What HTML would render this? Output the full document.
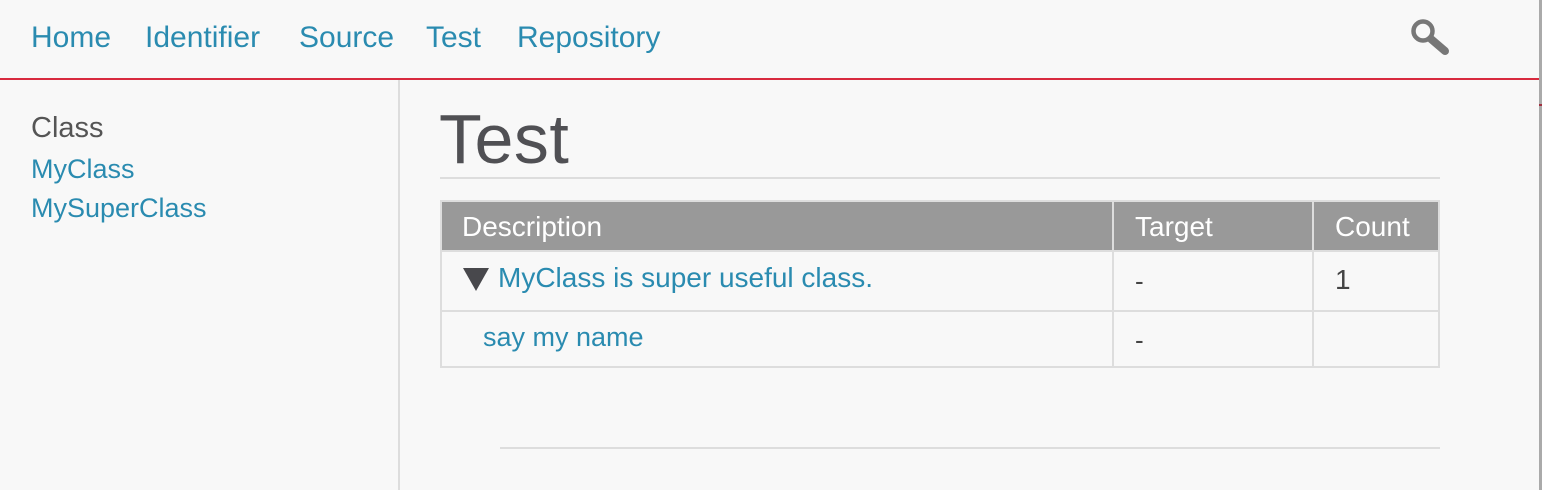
<!DOCTYPE html>
<html><head><meta charset="utf-8"><style>
*{margin:0;padding:0;box-sizing:border-box}
body{width:1542px;height:490px;background:#f8f8f8;position:relative;overflow:hidden;font-family:"Liberation Sans",sans-serif}
.t{position:absolute;line-height:1;white-space:nowrap}
.a{color:#2a8bb0}
.r{position:absolute}
</style></head><body>
<div class="r" style="left:0;top:78px;width:1540px;height:2px;background:#d82a3e"></div>
<div class="r" style="left:1539px;top:0;width:3px;height:490px;background:#aaa"></div>
<div class="r" style="left:1539px;top:104px;width:3px;height:2px;background:#a03040"></div>
<div class="r" style="left:398px;top:80px;width:2px;height:410px;background:#ddd"></div>

<span class="t a" style="left:31px;top:23px;font-size:30px">Home</span>
<span class="t a" style="left:145px;top:23px;font-size:30px">Identifier</span>
<span class="t a" style="left:299px;top:23px;font-size:30px">Source</span>
<span class="t a" style="left:426px;top:23px;font-size:30px">Test</span>
<span class="t a" style="left:517px;top:23px;font-size:30px">Repository</span>

<svg class="r" style="left:1408px;top:16px" width="46" height="42" viewBox="0 0 46 42">
<circle cx="15" cy="15" r="9.5" fill="none" stroke="#777" stroke-width="4.5"/>
<line x1="23" y1="23" x2="37" y2="35" stroke="#777" stroke-width="8" stroke-linecap="round"/>
</svg>

<span class="t" style="left:31px;top:114px;font-size:29px;color:#555">Class</span>
<span class="t a" style="left:31px;top:156px;font-size:27px">MyClass</span>
<span class="t a" style="left:31px;top:195px;font-size:27px">MySuperClass</span>

<span class="t" style="left:439px;top:104px;font-size:70px;color:#505054;letter-spacing:0.5px">Test</span>
<div class="r" style="left:440px;top:177px;width:1000px;height:2px;background:#ddd"></div>

<div class="r" style="left:440px;top:200px;width:1000px;height:168px;border:2px solid #ddd"></div>
<div class="r" style="left:442px;top:202px;width:996px;height:48px;background:#999"></div>
<div class="r" style="left:442px;top:250px;width:996px;height:2px;background:#ddd"></div>
<div class="r" style="left:442px;top:310px;width:996px;height:2px;background:#ddd"></div>
<div class="r" style="left:1112px;top:202px;width:2px;height:164px;background:#ddd"></div>
<div class="r" style="left:1312px;top:202px;width:2px;height:164px;background:#ddd"></div>

<span class="t" style="left:462px;top:213px;font-size:28px;color:#fff">Description</span>
<span class="t" style="left:1135px;top:213px;font-size:28px;color:#fff">Target</span>
<span class="t" style="left:1335px;top:213px;font-size:28px;color:#fff">Count</span>

<svg class="r" style="left:463px;top:268px" width="26" height="24"><polygon points="0,0 26,0 13,23" fill="#48484c"/></svg>
<span class="t a" style="left:498px;top:264px;font-size:28px">MyClass is super useful class.</span>
<span class="t" style="left:1135px;top:268px;font-size:26px;color:#444">-</span>
<span class="t" style="left:1335px;top:266px;font-size:28px;color:#444">1</span>

<span class="t a" style="left:483px;top:324px;font-size:27px">say my name</span>
<span class="t" style="left:1135px;top:327px;font-size:26px;color:#444">-</span>

<div class="r" style="left:500px;top:447px;width:940px;height:2px;background:#ddd"></div>
</body></html>
